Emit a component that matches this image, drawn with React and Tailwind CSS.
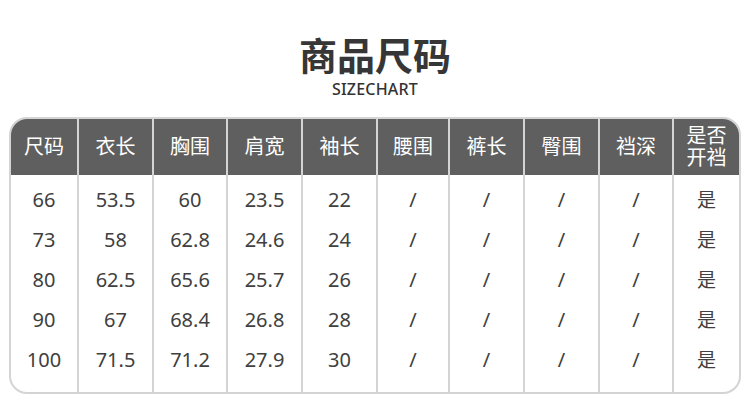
const font = { fontFamily: '"Noto Sans", "Noto Sans CJK SC", sans-serif' };

const columns = [
  { title: ['尺码'], width: 'w-[66px]', values: ['66', '73', '80', '90', '100'] },
  { title: ['衣长'], width: 'w-[75px]', values: ['53.5', '58', '62.5', '67', '71.5'] },
  { title: ['胸围'], width: 'w-[74px]', values: ['60', '62.8', '65.6', '68.4', '71.2'] },
  { title: ['肩宽'], width: 'w-[75px]', values: ['23.5', '24.6', '25.7', '26.8', '27.9'] },
  { title: ['袖长'], width: 'w-[75px]', values: ['22', '24', '26', '28', '30'] },
  { title: ['腰围'], width: 'w-[72px]', values: ['/', '/', '/', '/', '/'] },
  { title: ['裤长'], width: 'w-[75px]', values: ['/', '/', '/', '/', '/'] },
  { title: ['臀围'], width: 'w-[75px]', values: ['/', '/', '/', '/', '/'] },
  { title: ['裆深'], width: 'w-[74px]', values: ['/', '/', '/', '/', '/'] },
  { title: ['是否', '开裆'], width: 'flex-1', values: ['是', '是', '是', '是', '是'] },
];

function Column({ col, first }) {
  return (
    <div className={`flex flex-col ${col.width} ${first ? '' : 'border-l-2 border-[#d4d4d4]'}`}>
      <div className="flex h-[56px] flex-col items-center justify-center bg-[#5f5f5f] text-white">
        {col.title.map((t) => (
          <span key={t} className={col.title.length > 1 ? 'text-[20px] leading-[22px]' : 'text-[20px] leading-[24px]'}>
            {t}
          </span>
        ))}
      </div>
      <div className="flex flex-col pt-[5px] pb-[12px]">
        {col.values.map((v, i) => (
          <div key={i} className={`flex h-[40px] items-center justify-center text-[#404040] ${v === '是' ? 'text-[19px]' : 'text-[20px]'}`}>
            {v}
          </div>
        ))}
      </div>
    </div>
  );
}

export default function App() {
  return (
    <div className="h-[408px] w-[750px] bg-white" style={font}>
      <div className="flex flex-col items-center pt-[35px]">
        <h1 className="text-[38px] font-bold leading-[38px] text-[#363636]" style={{ fontFamily: '"Noto Sans CJK SC", sans-serif' }}>
          商品尺码
        </h1>
        <p className="mt-[5px] text-[16px] font-medium leading-[22px] tracking-[0.2px] text-[#333333]">SIZECHART</p>
      </div>
      <div className="ml-[9px] mt-[17px] flex w-[732px] overflow-hidden rounded-[18px] border-2 border-[#d4d4d4]">
        {columns.map((col, i) => (
          <Column key={i} col={col} first={i === 0} />
        ))}
      </div>
    </div>
  );
}
